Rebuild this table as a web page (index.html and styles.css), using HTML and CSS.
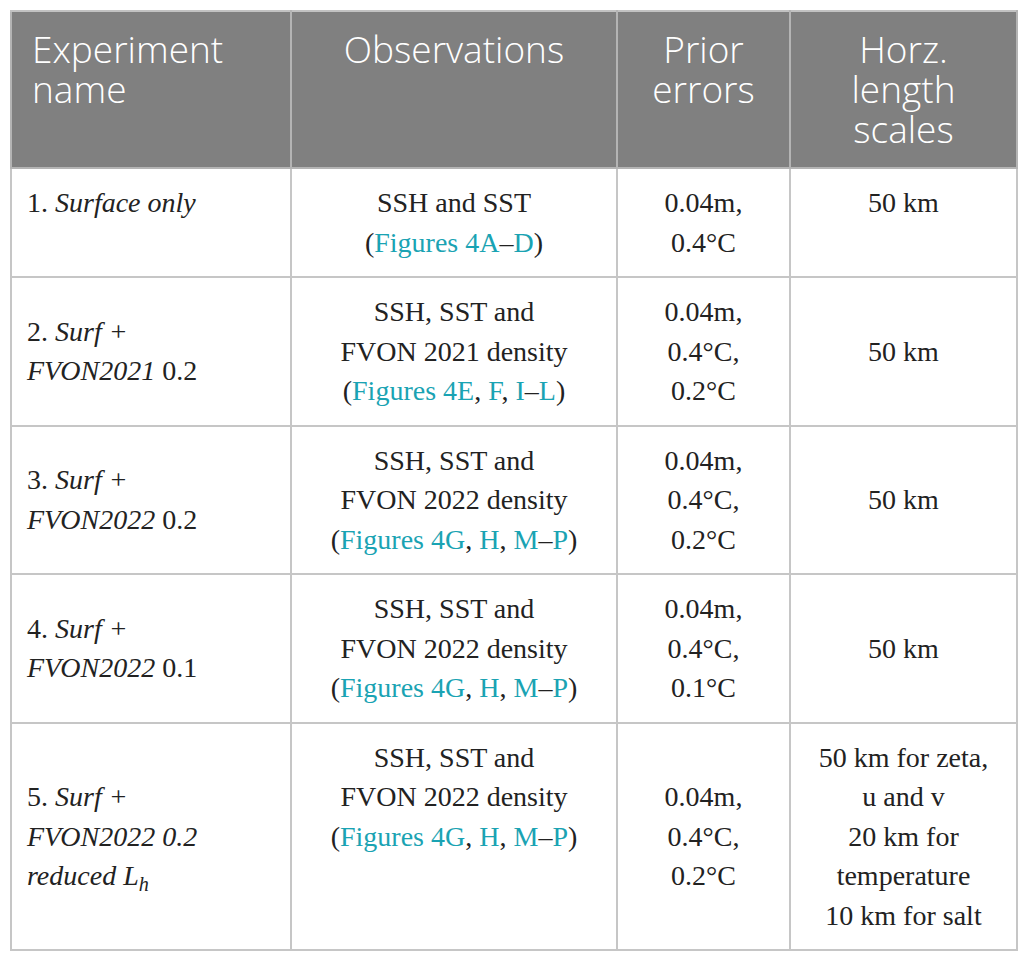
FILE: index.html
```html
<!DOCTYPE html>
<html>
<head>
<meta charset="utf-8">
<link rel="stylesheet" href="styles.css">
</head>
<body>
<table class="tbl">
  <colgroup>
    <col class="c1"><col class="c2"><col class="c3"><col class="c4">
  </colgroup>
  <thead>
    <tr>
      <th class="left">Experiment<br>name</th>
      <th>Observations</th>
      <th>Prior<br>errors</th>
      <th>Horz.<br>length<br>scales</th>
    </tr>
  </thead>
  <tbody>
    <tr class="top">
      <td class="left">1. <i>Surface only</i></td>
      <td>SSH and SST<br>(<a>Figures 4A</a>–<a>D</a>)</td>
      <td>0.04m,<br>0.4°C</td>
      <td>50 km</td>
    </tr>
    <tr>
      <td class="left">2. <i>Surf +<br>FVON2021</i> 0.2</td>
      <td>SSH, SST and<br>FVON 2021 density<br>(<a>Figures 4E</a>, <a>F</a>, <a>I</a>–<a>L</a>)</td>
      <td>0.04m,<br>0.4°C,<br>0.2°C</td>
      <td>50 km</td>
    </tr>
    <tr>
      <td class="left">3. <i>Surf +<br>FVON2022</i> 0.2</td>
      <td>SSH, SST and<br>FVON 2022 density<br>(<a>Figures 4G</a>, <a>H</a>, <a>M</a>–<a>P</a>)</td>
      <td>0.04m,<br>0.4°C,<br>0.2°C</td>
      <td>50 km</td>
    </tr>
    <tr>
      <td class="left">4. <i>Surf +<br>FVON2022</i> 0.1</td>
      <td>SSH, SST and<br>FVON 2022 density<br>(<a>Figures 4G</a>, <a>H</a>, <a>M</a>–<a>P</a>)</td>
      <td>0.04m,<br>0.4°C,<br>0.1°C</td>
      <td>50 km</td>
    </tr>
    <tr>
      <td class="left">5. <i>Surf +<br>FVON2022 0.2<br>reduced L<sub>h</sub></i></td>
      <td class="vtop">SSH, SST and<br>FVON 2022 density<br>(<a>Figures 4G</a>, <a>H</a>, <a>M</a>–<a>P</a>)</td>
      <td>0.04m,<br>0.4°C,<br>0.2°C</td>
      <td>50 km for zeta,<br>u and v<br>20 km for<br>temperature<br>10 km for salt</td>
    </tr>
  </tbody>
</table>
</body>
</html>
```

FILE: styles.css
```css
html, body {
  margin: 0;
  padding: 0;
  background: #ffffff;
}

body {
  padding: 10px;
}

.tbl {
  width: 1006px;
  border-collapse: collapse;
  table-layout: fixed;
  border: 2px solid #c2c2c2;
}

.c1 { width: 280px; }
.c2 { width: 326px; }
.c3 { width: 173px; }
.c4 { width: 227px; }

.tbl th {
  background: #808080;
  color: #ffffff;
  font-family: "Open Sans", "Liberation Sans", sans-serif;
  font-weight: 350;
  font-size: 37px;
  line-height: 40px;
  text-align: center;
  vertical-align: top;
  padding: 17px 10px 18px;
  border: 2px solid #b4b4b4;
  border-top-color: #c2c2c2;
}

.tbl th.left {
  text-align: left;
  padding-left: 20px;
}

.tbl td {
  font-family: "Liberation Serif", "DejaVu Serif", serif;
  font-size: 28px;
  line-height: 39.5px;
  color: #222222;
  text-align: center;
  vertical-align: middle;
  padding: 14px 10px;
  border: 2px solid #c6c6c6;
}

.tbl td.left {
  text-align: left;
  padding-left: 15px;
}

.tbl tr.top td,
.tbl td.vtop {
  vertical-align: top;
}

.tbl a {
  color: #1aa3b3;
  text-decoration: none;
}

.tbl sub {
  font-size: 0.72em;
  line-height: 0;
  vertical-align: -0.3em;
}
```
